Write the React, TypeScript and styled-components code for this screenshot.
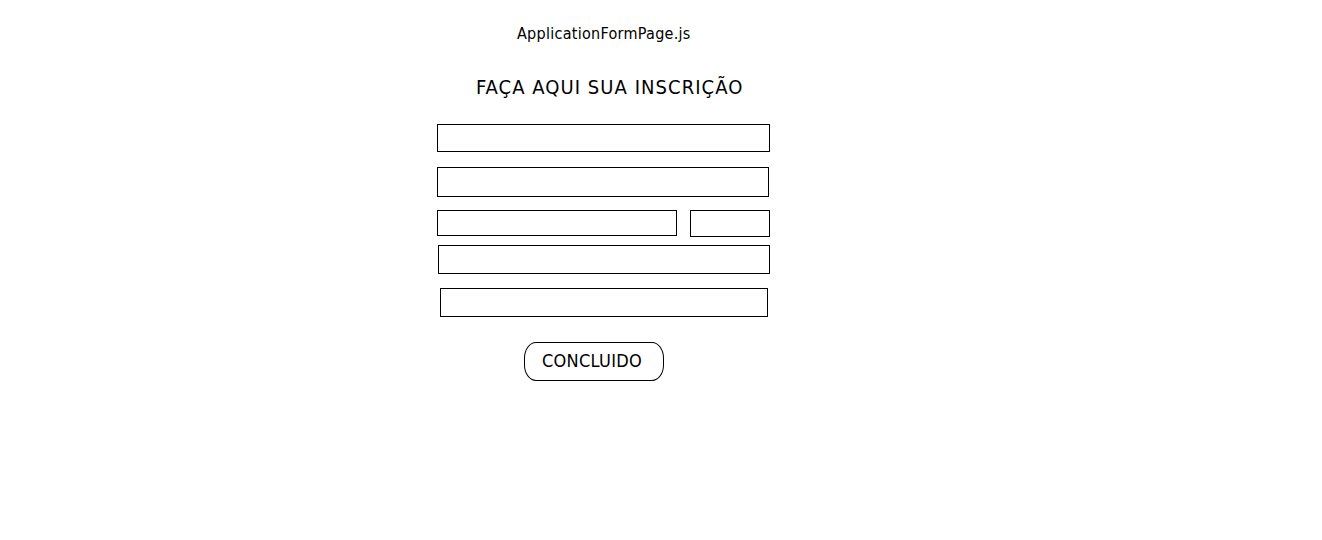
import React from "react";
import styled, { createGlobalStyle } from "styled-components";

const Global = createGlobalStyle`
  html, body { margin: 0; padding: 0; background: #fff; }
  body { font-family: "DejaVu Sans Condensed", "DejaVu Sans", sans-serif; color: #000; }
`;

const Page = styled.div`
  width: 1322px;
  height: 540px;
  background: #fff;
  padding: 23px 0 0 437px;
  box-sizing: border-box;
  display: flex;
  flex-direction: column;
  align-items: flex-start;
`;

const FileName = styled.div`
  margin-left: 80px;
  font-size: 16px;
  line-height: 22px;
  letter-spacing: 0.28px;
`;

const Title = styled.h1`
  margin: 30px 0 0 39px;
  font-size: 20px;
  font-weight: normal;
  line-height: 24px;
  letter-spacing: 1.05px;
`;

const Field = styled.div<{ $w: number; $h: number; $top: number; $left?: number }>`
  box-sizing: border-box;
  width: ${(p) => p.$w}px;
  height: ${(p) => p.$h}px;
  margin-top: ${(p) => p.$top}px;
  margin-left: ${(p) => p.$left ?? 0}px;
  border: 1px solid #000;
  background: #fff;
`;

const Row = styled.div<{ $top: number }>`
  display: flex;
  align-items: flex-start;
  gap: 13px;
  margin-top: ${(p) => p.$top}px;
`;

const Button = styled.button`
  box-sizing: border-box;
  margin: 25px 0 0 87px;
  width: 140px;
  height: 39px;
  border: 1px solid #000;
  border-radius: 12px / 16px;
  background: #fff;
  font-family: inherit;
  font-size: 18px;
  letter-spacing: 0.3px;
  color: #000;
  padding: 0 4px 2px 0;
  text-align: center;
`;

export default function App() {
  return (
    <>
      <Global />
      <Page>
        <FileName>ApplicationFormPage.js</FileName>
        <Title>FAÇA AQUI SUA INSCRIÇÃO</Title>
        <Field $w={333} $h={28} $top={25} />
        <Field $w={332} $h={30} $top={15} />
        <Row $top={13}>
          <Field $w={240} $h={26} $top={0} />
          <Field $w={80} $h={27} $top={0} />
        </Row>
        <Field $w={332} $h={29} $top={8} $left={1} />
        <Field $w={328} $h={29} $top={14} $left={3} />
        <Button>CONCLUIDO</Button>
      </Page>
    </>
  );
}
